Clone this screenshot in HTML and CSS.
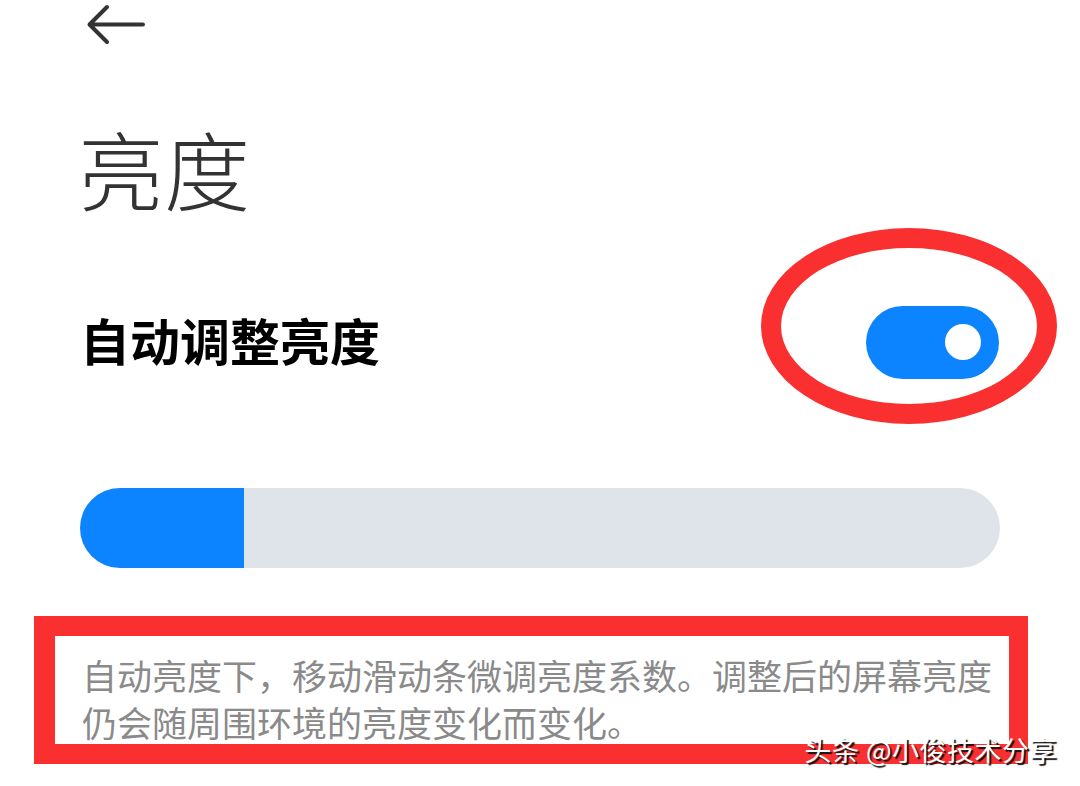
FILE: index.html
```html
<!DOCTYPE html>
<html lang="zh-CN">
<head>
  <meta charset="UTF-8">
  <meta name="viewport" content="width=device-width, initial-scale=1.0">
  <title>亮度</title>
  <link rel="stylesheet" href="styles.css">
</head>
<body>
  <div class="page">
    <div class="topbar">
      <svg class="back" width="60" height="42" viewBox="0 0 60 42" aria-label="返回">
        <path d="M57 20.5H4M21 3L3.5 20.5L21 38" fill="none" stroke="#333" stroke-width="4" stroke-linecap="round" stroke-linejoin="round"/>
      </svg>
    </div>

    <h1 class="title">亮度</h1>

    <div class="row">
      <span class="row-label">自动调整亮度</span>
      <div class="switch on">
        <span class="knob"></span>
      </div>
      <!-- annotation -->
      <span class="mark-ellipse"></span>
    </div>

    <div class="slider">
      <div class="slider-fill" style="width: 164px;"></div>
    </div>

    <p class="desc">自动亮度下，移动滑动条微调亮度系数。调整后的屏幕亮度仍会随周围环境的亮度变化而变化。</p>

    <div class="watermark">头条 @小俊技术分享</div>
  </div>
</body>
</html>
```

FILE: styles.css
```css
body {
  margin: 0;
  background: #fff;
  font-family: "Noto Sans CJK SC", "Noto Sans", sans-serif;
}
.page {
  position: relative;
  width: 920px;
  height: 786px;
  padding: 0 80px;
  overflow: hidden;
}
.topbar {
  height: 52px;
}
.back {
  display: block;
  margin: 4px 0 0 6px;
}
.title {
  margin: 69px 0 0 -2px;
  font-size: 86px;
  line-height: 1;
  font-weight: 300;
  color: #333;
}
.row {
  position: relative;
  display: flex;
  align-items: center;
  justify-content: space-between;
  height: 80px;
  margin-top: 91px;
}
.row-label {
  font-size: 50px;
  font-weight: 700;
  color: #000;
  margin-bottom: 6px;
}
.switch {
  position: relative;
  width: 133px;
  height: 73px;
  border-radius: 37px;
  background: #0d84ff;
  margin-right: 1px;
}
.knob {
  position: absolute;
  right: 18px;
  top: 18px;
  width: 36px;
  height: 36px;
  border-radius: 50%;
  background: #fff;
}
.mark-ellipse {
  position: absolute;
  left: 681px;
  top: -74px;
  width: 256px;
  height: 156px;
  border: 20px solid #fa3030;
  border-radius: 50%;
}
.slider {
  display: flex;
  height: 80px;
  margin-top: 106px;
  border-radius: 40px;
  background: #dfe3ea;
  overflow: hidden;
}
.slider-fill {
  background: #0d84ff;
}
.desc {
  width: 920px;
  margin: 48px 0 0 -46px;
  padding: 15px 7px 0 27px;
  height: 93px;
  border: 20px solid #fa3030;
  border-left-width: 21px;
  border-right-width: 19px;
  font-size: 35px;
  line-height: 47px;
  color: #8a8a8a;
}
.watermark {
  position: absolute;
  right: 23px;
  bottom: 23px;
  font-size: 27px;
  line-height: 1;
  color: #fff;
  text-shadow: 2px 2px 1px #111;
  letter-spacing: 0.5px;
}
```
